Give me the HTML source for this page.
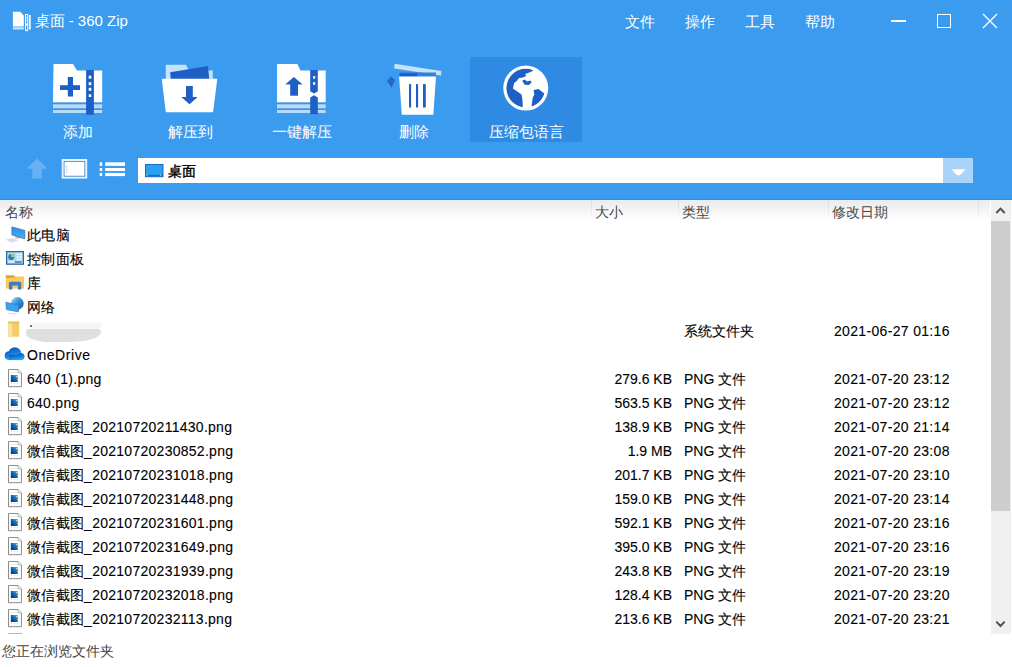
<!DOCTYPE html>
<html><head><meta charset="utf-8">
<style>
*{margin:0;padding:0;box-sizing:border-box}
html,body{width:1012px;height:667px;overflow:hidden;background:#fff;font-family:"Liberation Sans",sans-serif}
.abs{position:absolute}
#hdr{position:absolute;left:0;top:0;width:1012px;height:199px;border-bottom:0;background:#3a9bef}
.title{position:absolute;left:34.5px;top:12px;color:#fff;font-size:15px;line-height:18px;white-space:nowrap}
.menu{position:absolute;top:13px;color:#fff;font-size:15px;line-height:18px;white-space:nowrap}
.tb{position:absolute;top:57px;width:112px;height:85px}
.tb.sel{background:#2e8ae2;border-radius:2px}
.tbl{position:absolute;left:0;width:112px;top:66px;text-align:center;color:#fff;font-size:15px;line-height:18px;white-space:nowrap}
.tb svg{position:absolute}
#addr{position:absolute;left:138px;top:158px;width:835px;height:25px;background:#fff}
#dd{position:absolute;left:943px;top:158px;width:30px;height:25px;background:#a9d3f8}
#colhdr{position:absolute;left:0;top:199px;width:990px;height:24px;background:linear-gradient(#3a8ad8 0,#3a8ad8 1px,#e2f1fd 1px,#e2f1fd 2px,#ebebeb 2px,#fff 21px)}
.ch{position:absolute;top:4.7px;font-size:14px;line-height:16px;color:#474747;white-space:nowrap}
.sep{position:absolute;top:1px;width:1px;height:20px;background:linear-gradient(#dcdcdc,rgba(235,235,235,0))}
.row{position:absolute;left:0;width:990px;height:24px;font-size:14px;color:#000;-webkit-text-stroke:0.1px #000;white-space:nowrap}
.row span{position:absolute;top:3px;line-height:18px}
.nm{left:27px;letter-spacing:0.27px}
.sz{right:calc(990px - 672px)}
.tp{left:684px}
.dt{left:834px;letter-spacing:0.33px}
#sb{position:absolute;left:991px;top:200px;width:19.5px;height:434px;background:#f0f0f0}
#thumb{position:absolute;left:991px;top:221px;width:19px;height:290px;background:#cdcdcd}
#status{position:absolute;left:2px;top:642px;font-size:14px;line-height:18px;color:#444;white-space:nowrap}
</style></head><body>
<div id="hdr">
  <svg class="abs" style="left:12px;top:11px" width="20" height="21" viewBox="0 0 20 21">
<path d="M0.9 0.7H8.3L11.8 4.4V14.9H0.9Z" fill="#fff"/>
<rect x="0.9" y="15.5" width="10.9" height="1.1" fill="#fff"/>
<rect x="0.9" y="17.3" width="10.9" height="1.1" fill="#fff"/>
<rect x="13.5" y="3.5" width="2.3" height="15.8" fill="none" stroke="#fff" stroke-width="1"/>
<g fill="#fff"><rect x="14.2" y="6.5" width="1" height="1"/><rect x="14.2" y="9" width="1" height="1"/><rect x="13.5" y="12.5" width="2.3" height="2"/><rect x="14" y="19.3" width="1.6" height="0.9"/></g>
<rect x="17.1" y="4" width="1.6" height="14.6" fill="#fff"/>
</svg>
  <div class="title">桌面 - 360 Zip</div>
  <div class="menu" style="left:625px">文件</div>
  <div class="menu" style="left:685px">操作</div>
  <div class="menu" style="left:745px">工具</div>
  <div class="menu" style="left:805px">帮助</div>
  <div class="abs" style="left:891px;top:19.7px;width:14.5px;height:2.5px;background:#fff"></div>
  <div class="abs" style="left:936.5px;top:14px;width:14.5px;height:13.5px;border:1.4px solid #fff"></div>
  <svg class="abs" style="left:982px;top:13px" width="16" height="16" viewBox="0 0 16 16"><path d="M1 1L15 15M15 1L1 15" stroke="#fff" stroke-width="1.4"/></svg>

  <svg class="abs" style="left:53px;top:64px" width="50" height="51" viewBox="0 0 50 51">
<path d="M0.5 0H20L24 6.5H49.2V38.6H0Z" fill="#fff"/>
<rect x="0" y="38.6" width="49.2" height="10.4" fill="#4a8fd8"/><rect x="0" y="40.3" width="49.2" height="4" fill="#b6dbfb"/>
<rect x="0" y="46" width="49.2" height="3" fill="#b6dbfb"/>
<rect x="33.1" y="6" width="7.8" height="44.8" fill="#1d5fc4"/>
<g fill="#fff"><rect x="35.7" y="11.7" width="2.6" height="3"/><rect x="35.7" y="18.2" width="2.6" height="3"/><rect x="35.7" y="23.8" width="2.6" height="3"/><rect x="35.7" y="30.3" width="2.6" height="2.7"/></g>
<rect x="7" y="21.2" width="20" height="4.8" fill="#1d5fc4"/>
<rect x="14.8" y="13" width="5.2" height="19.5" fill="#1d5fc4"/>
</svg>
<div class="tb" style="left:22px"><div class="tbl">添加</div></div>
  <svg class="abs" style="left:158px;top:60px" width="64" height="58" viewBox="0 0 64 58">
<path d="M7.8 4.8H28L31 10.4H54.8V30H7.8Z" fill="#c5e1fb"/>
<path d="M12.2 12.2L50 6.1L51.5 22H13Z" fill="#1d5fc4"/>
<path d="M4.5 18.7H58.6Q59.3 18.7 59.2 19.5L55.2 51.4Q55.1 52.2 54.3 52.2H8.6Q7.8 52.2 7.7 51.4L3.8 19.5Q3.7 18.7 4.5 18.7Z" fill="#fff"/>
<rect x="28" y="26" width="6.8" height="11.4" fill="#1d5fc4"/>
<path d="M23.3 37H39.6L31.5 44.3Z" fill="#1d5fc4"/>
</svg>
<div class="tb" style="left:134px"><div class="tbl">解压到</div></div>
  <svg class="abs" style="left:270px;top:60px" width="64" height="58" viewBox="0 0 64 58">
<path d="M7 3.9H27.4L30.4 10.4H55.7V42.6H7Z" fill="#fff"/>
<rect x="7" y="42.6" width="48.7" height="10.4" fill="#4a8fd8"/><rect x="7" y="44.3" width="48.7" height="4" fill="#b6dbfb"/>
<rect x="7" y="50" width="48.7" height="3" fill="#b6dbfb"/>
<path d="M40.2 10H47.8V31.3L44 33.5L40.2 31.3Z" fill="#1d5fc4"/>
<path d="M40.2 54.3H47.8V37.4L44 35.2L40.2 37.4Z" fill="#1d5fc4"/>
<g fill="#fff"><rect x="43" y="16.1" width="2.2" height="2.6"/><rect x="43" y="22.2" width="2.2" height="2.6"/></g>
<rect x="20.2" y="23.5" width="7.8" height="12.2" fill="#1d5fc4"/>
<path d="M15.2 24.6H32.6L23.9 17Z" fill="#1d5fc4"/>
</svg>
<div class="tb" style="left:246px"><div class="tbl">一键解压</div></div>
  <svg class="abs" style="left:382px;top:58px" width="64" height="60" viewBox="0 0 64 60">
<path d="M12.6 5.8L59.4 13L59 17.6L12.2 10.6Z" fill="#c5e2fb"/>
<path d="M17.5 14.4H54L54 18.5H17.3Z" fill="#3580d8"/><path d="M18 15.3H35L35 18.5H17.3Z" fill="#1d5fc4"/>
<path d="M17.1 18.5H54L51.3 56.7H19.8Z" fill="#fff"/>
<g fill="#1d5fc4"><rect x="27" y="26.1" width="2.1" height="23.4"/><rect x="34" y="26.1" width="2.1" height="23.4"/><rect x="41" y="26.1" width="2.8" height="23.4"/></g>
<path d="M5 23L9 18.5L13 22L9.5 29.7Z" fill="#1d5fc4" opacity="0.85"/>
</svg>
<div class="tb" style="left:358px"><div class="tbl">删除</div></div>
  <div class="tb sel" style="left:470px"><div class="tbl">压缩包语言</div></div>
<svg class="abs" style="left:498px;top:62px" width="54" height="54" viewBox="0 0 54 54">
<circle cx="27.75" cy="26.1" r="22.5" fill="#fff"/>
<clipPath id="gc"><circle cx="27.75" cy="26.1" r="19.3"/></clipPath>
<g clip-path="url(#gc)" fill="#1d5fc4">
<path d="M34.8 0L34.8 8.9L30 10.9L27.1 12.1L28.3 13.8L25.1 15.4L21 16L19 18.8L16.2 21.1L15.4 24.3L15 26.7L18.6 29.1L23.5 32.4L24.3 36.4L25.1 48.6L0 48.6L0 0Z"/>
<path d="M24.2 18.8L26.7 17.4L29.1 19.4L32.4 18.6L33.6 20.6L30.8 23.1L26.7 22.7Z"/>
<path d="M35.6 27.9L40.5 27.1L45.3 30.8L48.6 32.4L48.6 48.6L33.2 48.6L34 40.5L34.8 35.6L36.4 32.4Z"/>
</g>
</svg>

  <svg class="abs" style="left:22px;top:152px" width="110" height="38" viewBox="0 0 110 38">
<path d="M4.3 16.8L15.2 6.5L25.5 16.8H20.1V26.6H10.3V16.8Z" fill="#66b1f2"/>
<rect x="39.7" y="7" width="25.5" height="19.6" fill="#e3f5ff"/>
<rect x="41.7" y="9" width="21.5" height="15.6" fill="#3a7fc8"/>
<rect x="42.5" y="9.8" width="19.9" height="14" fill="#fff"/>
<g fill="#777"><rect x="44.3" y="14.2" width="0.9" height="0.9"/><rect x="44.3" y="16.9" width="0.9" height="0.9"/><rect x="44.3" y="19.6" width="0.9" height="0.9"/></g>
<g fill="#fff"><rect x="77.7" y="10.3" width="2.5" height="3.6"/><rect x="77.7" y="16" width="2.5" height="3"/><rect x="77.7" y="20.9" width="2.5" height="3.2"/>
<rect x="83.2" y="10.3" width="19.8" height="3.6"/><rect x="83.2" y="16" width="19.8" height="3"/><rect x="83.2" y="20.9" width="19.8" height="3.2"/></g>
</svg>
<div id="addr"><svg class="abs" style="left:6.5px;top:6px" width="19" height="14" viewBox="0 0 19 14"><rect x="0.5" y="0.5" width="17.5" height="12.2" fill="#29a0f0" stroke="#1b6cbf" stroke-width="1"/><rect x="1" y="10.8" width="16.5" height="1.5" fill="#1b6cbf"/><g fill="#fff"><rect x="1.5" y="10.5" width="1" height="1"/><rect x="15" y="10.5" width="1" height="1"/></g></svg><div class="abs" style="left:30px;top:4px;font-size:14px;line-height:18px;color:#000;-webkit-text-stroke:0.4px #000">桌面</div></div>
  <div id="dd"><svg class="abs" style="left:8px;top:11px" width="15" height="8" viewBox="0 0 15 8"><path d="M0.5 0.3H14.5L9 6.2H6Z" fill="#fff"/></svg></div>
</div>

<div id="colhdr">
  <div class="ch" style="left:5px">名称</div>
  <div class="sep" style="left:591px"></div>
  <div class="ch" style="left:595px">大小</div>
  <div class="sep" style="left:678px"></div>
  <div class="ch" style="left:682px">类型</div>
  <div class="sep" style="left:828px"></div>
  <div class="ch" style="left:832px">修改日期</div>
  <div class="sep" style="left:978px"></div>
</div>

<div id="rows">
<div class="row" style="top:223px"><svg class="abs" style="left:0px;top:0px" width="28" height="24" viewBox="0 0 28 24">
<path d="M5.5 16.5L12.5 15.3L18.5 17.3L11 19.7Z" fill="#d9dcea"/>
<path d="M15.3 13.6H19.9V15.5H15.3Z" fill="#c9a38f" opacity="0.8"/>
<defs><linearGradient id="mg" x1="0" y1="0" x2="0" y2="1"><stop offset="0" stop-color="#2f8fe0"/><stop offset="1" stop-color="#45b0f5"/></linearGradient></defs>
<path d="M11.9 3.9L24.8 7.4V15.8L11.9 11.9Z" fill="url(#mg)" stroke="#2a6aa8" stroke-width="0.7"/>
</svg><span class="nm">此电脑</span></div>
<div class="row" style="top:247px"><svg class="abs" style="left:6px;top:4px" width="18" height="14" viewBox="0 0 18 14">
<rect x="0.6" y="0.6" width="16.8" height="12.6" fill="#a9d8f7" stroke="#2d6495" stroke-width="1.2"/>
<path d="M5.2 3A3 3 0 1 0 8.2 6H5.2Z" fill="#2f78b8"/><path d="M5.8 2.4V5.4H8.8A3 3 0 0 0 5.8 2.4Z" fill="#9cc94a"/>
<g fill="#fff"><rect x="10.6" y="2.6" width="2" height="1.6"/><rect x="13.4" y="2.6" width="2" height="1.6"/><rect x="10.6" y="5.2" width="2" height="1.6"/><rect x="13.4" y="5.2" width="2" height="1.6"/><rect x="10.6" y="7.8" width="2" height="1.6"/><rect x="13.4" y="7.8" width="2" height="1.6"/></g>
<rect x="2.2" y="10.4" width="6" height="1.2" fill="#eef6fb"/><rect x="9" y="10.4" width="6.5" height="1.2" fill="#2d6495"/>
</svg><span class="nm">控制面板</span></div>
<div class="row" style="top:271px"><svg class="abs" style="left:5px;top:3px" width="20" height="18" viewBox="0 0 20 18">
<path d="M0.8 1.4H9.4L10.5 2.5H19V14.5H0.8Z" fill="#f9c95e"/>
<rect x="0.8" y="1.4" width="8.6" height="2.4" fill="#e3a226"/>
<path d="M3.9 9.2Q3.9 7.7 5.4 7.7H14.8Q16.3 7.7 16.3 9.2V15.6H12.9V11.4H7.3V15.6H3.9Z" fill="#3c7fbf"/>
</svg><span class="nm">库</span></div>
<div class="row" style="top:295px"><svg class="abs" style="left:0px;top:0px" width="28" height="24" viewBox="0 0 28 24">
<defs><linearGradient id="ng" x1="0" y1="0" x2="1" y2="1"><stop offset="0" stop-color="#a6e2f0"/><stop offset="0.45" stop-color="#3b8fd8"/><stop offset="1" stop-color="#1d5f8f"/></linearGradient></defs>
<circle cx="17.4" cy="8.4" r="6.3" fill="url(#ng)"/>
<path d="M5.9 7.2L18.8 10.3L18.4 16.9L6.3 14.6Z" fill="#3aa2ee" stroke="#2a74b8" stroke-width="0.6"/>
<path d="M8.2 18.1L16 18.8L16 19.5L8.2 18.8Z" fill="#c5cbd8"/>
</svg><span class="nm">网络</span></div>
<div class="row" style="top:319px"><svg class="abs" style="left:0px;top:0px" width="24" height="24" viewBox="0 0 24 24">
<rect x="8" y="2.7" width="11.2" height="15" fill="#f3cd66"/>
<rect x="8" y="2.7" width="4.2" height="15" fill="#f7e1a0"/>
<rect x="8" y="2.7" width="11.2" height="1.6" fill="#e9bb50"/>
</svg><span class="tp">系统文件夹</span><span class="dt">2021-06-27 01:16</span></div>
<div class="row" style="top:343px"><svg class="abs" style="left:0px;top:0px" width="28" height="24" viewBox="0 0 28 24">
<defs><linearGradient id="og" x1="0" y1="0" x2="0.3" y2="1"><stop offset="0" stop-color="#0a55b0"/><stop offset="0.5" stop-color="#1479d6"/><stop offset="1" stop-color="#22a2f2"/></linearGradient></defs>
<g fill="url(#og)"><circle cx="9" cy="12.7" r="4.4"/><circle cx="14.8" cy="10.6" r="6.4"/><circle cx="20.9" cy="13.5" r="3.6"/><rect x="9" y="12" width="11.9" height="5.1"/></g>
</svg><span class="nm" style="letter-spacing:0.55px">OneDrive</span></div>
<div class="row" style="top:367px"><svg class="abs" style="left:8px;top:2px" width="14" height="19" viewBox="0 0 14 19">
<path d="M0.5 0.5H10L13.4 3.9V17.7H0.5Z" fill="#fff" stroke="#8a8a8a" stroke-width="1"/>
<path d="M10 0.5V3.9H13.4" fill="#eee" stroke="#aaa" stroke-width="0.8"/>
<defs><linearGradient id="pg" x1="1" y1="0" x2="0" y2="1"><stop offset="0" stop-color="#4ab8f4"/><stop offset="0.5" stop-color="#1468b0"/><stop offset="1" stop-color="#052a5e"/></linearGradient></defs>
<rect x="2.8" y="6" width="7" height="7" fill="url(#pg)"/>
<rect x="8" y="7" width="1" height="1" fill="#cde"/>
<g fill="#cfe6f8"><rect x="2.5" y="14.5" width="8" height="0.6"/><rect x="2.5" y="3" width="6" height="0.6"/></g>
</svg><span class="nm">640 (1).png</span><span class="sz">279.6 KB</span><span class="tp">PNG 文件</span><span class="dt">2021-07-20 23:12</span></div>
<div class="row" style="top:391px"><svg class="abs" style="left:8px;top:2px" width="14" height="19" viewBox="0 0 14 19">
<path d="M0.5 0.5H10L13.4 3.9V17.7H0.5Z" fill="#fff" stroke="#8a8a8a" stroke-width="1"/>
<path d="M10 0.5V3.9H13.4" fill="#eee" stroke="#aaa" stroke-width="0.8"/>
<defs><linearGradient id="pg" x1="1" y1="0" x2="0" y2="1"><stop offset="0" stop-color="#4ab8f4"/><stop offset="0.5" stop-color="#1468b0"/><stop offset="1" stop-color="#052a5e"/></linearGradient></defs>
<rect x="2.8" y="6" width="7" height="7" fill="url(#pg)"/>
<rect x="8" y="7" width="1" height="1" fill="#cde"/>
<g fill="#cfe6f8"><rect x="2.5" y="14.5" width="8" height="0.6"/><rect x="2.5" y="3" width="6" height="0.6"/></g>
</svg><span class="nm">640.png</span><span class="sz">563.5 KB</span><span class="tp">PNG 文件</span><span class="dt">2021-07-20 23:12</span></div>
<div class="row" style="top:415px"><svg class="abs" style="left:8px;top:2px" width="14" height="19" viewBox="0 0 14 19">
<path d="M0.5 0.5H10L13.4 3.9V17.7H0.5Z" fill="#fff" stroke="#8a8a8a" stroke-width="1"/>
<path d="M10 0.5V3.9H13.4" fill="#eee" stroke="#aaa" stroke-width="0.8"/>
<defs><linearGradient id="pg" x1="1" y1="0" x2="0" y2="1"><stop offset="0" stop-color="#4ab8f4"/><stop offset="0.5" stop-color="#1468b0"/><stop offset="1" stop-color="#052a5e"/></linearGradient></defs>
<rect x="2.8" y="6" width="7" height="7" fill="url(#pg)"/>
<rect x="8" y="7" width="1" height="1" fill="#cde"/>
<g fill="#cfe6f8"><rect x="2.5" y="14.5" width="8" height="0.6"/><rect x="2.5" y="3" width="6" height="0.6"/></g>
</svg><span class="nm">微信截图_20210720211430.png</span><span class="sz">138.9 KB</span><span class="tp">PNG 文件</span><span class="dt">2021-07-20 21:14</span></div>
<div class="row" style="top:439px"><svg class="abs" style="left:8px;top:2px" width="14" height="19" viewBox="0 0 14 19">
<path d="M0.5 0.5H10L13.4 3.9V17.7H0.5Z" fill="#fff" stroke="#8a8a8a" stroke-width="1"/>
<path d="M10 0.5V3.9H13.4" fill="#eee" stroke="#aaa" stroke-width="0.8"/>
<defs><linearGradient id="pg" x1="1" y1="0" x2="0" y2="1"><stop offset="0" stop-color="#4ab8f4"/><stop offset="0.5" stop-color="#1468b0"/><stop offset="1" stop-color="#052a5e"/></linearGradient></defs>
<rect x="2.8" y="6" width="7" height="7" fill="url(#pg)"/>
<rect x="8" y="7" width="1" height="1" fill="#cde"/>
<g fill="#cfe6f8"><rect x="2.5" y="14.5" width="8" height="0.6"/><rect x="2.5" y="3" width="6" height="0.6"/></g>
</svg><span class="nm">微信截图_20210720230852.png</span><span class="sz">1.9 MB</span><span class="tp">PNG 文件</span><span class="dt">2021-07-20 23:08</span></div>
<div class="row" style="top:463px"><svg class="abs" style="left:8px;top:2px" width="14" height="19" viewBox="0 0 14 19">
<path d="M0.5 0.5H10L13.4 3.9V17.7H0.5Z" fill="#fff" stroke="#8a8a8a" stroke-width="1"/>
<path d="M10 0.5V3.9H13.4" fill="#eee" stroke="#aaa" stroke-width="0.8"/>
<defs><linearGradient id="pg" x1="1" y1="0" x2="0" y2="1"><stop offset="0" stop-color="#4ab8f4"/><stop offset="0.5" stop-color="#1468b0"/><stop offset="1" stop-color="#052a5e"/></linearGradient></defs>
<rect x="2.8" y="6" width="7" height="7" fill="url(#pg)"/>
<rect x="8" y="7" width="1" height="1" fill="#cde"/>
<g fill="#cfe6f8"><rect x="2.5" y="14.5" width="8" height="0.6"/><rect x="2.5" y="3" width="6" height="0.6"/></g>
</svg><span class="nm">微信截图_20210720231018.png</span><span class="sz">201.7 KB</span><span class="tp">PNG 文件</span><span class="dt">2021-07-20 23:10</span></div>
<div class="row" style="top:487px"><svg class="abs" style="left:8px;top:2px" width="14" height="19" viewBox="0 0 14 19">
<path d="M0.5 0.5H10L13.4 3.9V17.7H0.5Z" fill="#fff" stroke="#8a8a8a" stroke-width="1"/>
<path d="M10 0.5V3.9H13.4" fill="#eee" stroke="#aaa" stroke-width="0.8"/>
<defs><linearGradient id="pg" x1="1" y1="0" x2="0" y2="1"><stop offset="0" stop-color="#4ab8f4"/><stop offset="0.5" stop-color="#1468b0"/><stop offset="1" stop-color="#052a5e"/></linearGradient></defs>
<rect x="2.8" y="6" width="7" height="7" fill="url(#pg)"/>
<rect x="8" y="7" width="1" height="1" fill="#cde"/>
<g fill="#cfe6f8"><rect x="2.5" y="14.5" width="8" height="0.6"/><rect x="2.5" y="3" width="6" height="0.6"/></g>
</svg><span class="nm">微信截图_20210720231448.png</span><span class="sz">159.0 KB</span><span class="tp">PNG 文件</span><span class="dt">2021-07-20 23:14</span></div>
<div class="row" style="top:511px"><svg class="abs" style="left:8px;top:2px" width="14" height="19" viewBox="0 0 14 19">
<path d="M0.5 0.5H10L13.4 3.9V17.7H0.5Z" fill="#fff" stroke="#8a8a8a" stroke-width="1"/>
<path d="M10 0.5V3.9H13.4" fill="#eee" stroke="#aaa" stroke-width="0.8"/>
<defs><linearGradient id="pg" x1="1" y1="0" x2="0" y2="1"><stop offset="0" stop-color="#4ab8f4"/><stop offset="0.5" stop-color="#1468b0"/><stop offset="1" stop-color="#052a5e"/></linearGradient></defs>
<rect x="2.8" y="6" width="7" height="7" fill="url(#pg)"/>
<rect x="8" y="7" width="1" height="1" fill="#cde"/>
<g fill="#cfe6f8"><rect x="2.5" y="14.5" width="8" height="0.6"/><rect x="2.5" y="3" width="6" height="0.6"/></g>
</svg><span class="nm">微信截图_20210720231601.png</span><span class="sz">592.1 KB</span><span class="tp">PNG 文件</span><span class="dt">2021-07-20 23:16</span></div>
<div class="row" style="top:535px"><svg class="abs" style="left:8px;top:2px" width="14" height="19" viewBox="0 0 14 19">
<path d="M0.5 0.5H10L13.4 3.9V17.7H0.5Z" fill="#fff" stroke="#8a8a8a" stroke-width="1"/>
<path d="M10 0.5V3.9H13.4" fill="#eee" stroke="#aaa" stroke-width="0.8"/>
<defs><linearGradient id="pg" x1="1" y1="0" x2="0" y2="1"><stop offset="0" stop-color="#4ab8f4"/><stop offset="0.5" stop-color="#1468b0"/><stop offset="1" stop-color="#052a5e"/></linearGradient></defs>
<rect x="2.8" y="6" width="7" height="7" fill="url(#pg)"/>
<rect x="8" y="7" width="1" height="1" fill="#cde"/>
<g fill="#cfe6f8"><rect x="2.5" y="14.5" width="8" height="0.6"/><rect x="2.5" y="3" width="6" height="0.6"/></g>
</svg><span class="nm">微信截图_20210720231649.png</span><span class="sz">395.0 KB</span><span class="tp">PNG 文件</span><span class="dt">2021-07-20 23:16</span></div>
<div class="row" style="top:559px"><svg class="abs" style="left:8px;top:2px" width="14" height="19" viewBox="0 0 14 19">
<path d="M0.5 0.5H10L13.4 3.9V17.7H0.5Z" fill="#fff" stroke="#8a8a8a" stroke-width="1"/>
<path d="M10 0.5V3.9H13.4" fill="#eee" stroke="#aaa" stroke-width="0.8"/>
<defs><linearGradient id="pg" x1="1" y1="0" x2="0" y2="1"><stop offset="0" stop-color="#4ab8f4"/><stop offset="0.5" stop-color="#1468b0"/><stop offset="1" stop-color="#052a5e"/></linearGradient></defs>
<rect x="2.8" y="6" width="7" height="7" fill="url(#pg)"/>
<rect x="8" y="7" width="1" height="1" fill="#cde"/>
<g fill="#cfe6f8"><rect x="2.5" y="14.5" width="8" height="0.6"/><rect x="2.5" y="3" width="6" height="0.6"/></g>
</svg><span class="nm">微信截图_20210720231939.png</span><span class="sz">243.8 KB</span><span class="tp">PNG 文件</span><span class="dt">2021-07-20 23:19</span></div>
<div class="row" style="top:583px"><svg class="abs" style="left:8px;top:2px" width="14" height="19" viewBox="0 0 14 19">
<path d="M0.5 0.5H10L13.4 3.9V17.7H0.5Z" fill="#fff" stroke="#8a8a8a" stroke-width="1"/>
<path d="M10 0.5V3.9H13.4" fill="#eee" stroke="#aaa" stroke-width="0.8"/>
<defs><linearGradient id="pg" x1="1" y1="0" x2="0" y2="1"><stop offset="0" stop-color="#4ab8f4"/><stop offset="0.5" stop-color="#1468b0"/><stop offset="1" stop-color="#052a5e"/></linearGradient></defs>
<rect x="2.8" y="6" width="7" height="7" fill="url(#pg)"/>
<rect x="8" y="7" width="1" height="1" fill="#cde"/>
<g fill="#cfe6f8"><rect x="2.5" y="14.5" width="8" height="0.6"/><rect x="2.5" y="3" width="6" height="0.6"/></g>
</svg><span class="nm">微信截图_20210720232018.png</span><span class="sz">128.4 KB</span><span class="tp">PNG 文件</span><span class="dt">2021-07-20 23:20</span></div>
<div class="row" style="top:607px"><svg class="abs" style="left:8px;top:2px" width="14" height="19" viewBox="0 0 14 19">
<path d="M0.5 0.5H10L13.4 3.9V17.7H0.5Z" fill="#fff" stroke="#8a8a8a" stroke-width="1"/>
<path d="M10 0.5V3.9H13.4" fill="#eee" stroke="#aaa" stroke-width="0.8"/>
<defs><linearGradient id="pg" x1="1" y1="0" x2="0" y2="1"><stop offset="0" stop-color="#4ab8f4"/><stop offset="0.5" stop-color="#1468b0"/><stop offset="1" stop-color="#052a5e"/></linearGradient></defs>
<rect x="2.8" y="6" width="7" height="7" fill="url(#pg)"/>
<rect x="8" y="7" width="1" height="1" fill="#cde"/>
<g fill="#cfe6f8"><rect x="2.5" y="14.5" width="8" height="0.6"/><rect x="2.5" y="3" width="6" height="0.6"/></g>
</svg><span class="nm">微信截图_20210720232113.png</span><span class="sz">213.6 KB</span><span class="tp">PNG 文件</span><span class="dt">2021-07-20 23:21</span></div>
</div>

<div class="abs" style="left:31.5px;top:322.7px;width:69.5px;height:6px;background:#f4f4f4;filter:blur(0.8px)"></div>
<div class="abs" style="left:26px;top:328.5px;width:75px;height:13.3px;background:#dfdfdf;border-radius:2px 4px 40px 30px/2px 4px 12px 10px;filter:blur(0.7px)"></div>
<div class="abs" style="left:30px;top:324.5px;width:2px;height:2px;background:#444;border-radius:1px"></div>
<div class="abs" style="left:0;top:199px;width:1012px;height:1px;background:#3a8ad8"></div>
<div id="sb"></div>
<div id="thumb"></div>
<svg class="abs" style="left:991px;top:203px" width="19" height="20" viewBox="0 0 19 20"><path d="M5.3 10L9.5 5.6L13.7 10" fill="none" stroke="#505050" stroke-width="2"/></svg>
<svg class="abs" style="left:991px;top:613px" width="19" height="20" viewBox="0 0 19 20"><path d="M5.3 8.6L9.5 13L13.7 8.6" fill="none" stroke="#505050" stroke-width="2"/></svg>
<div class="abs" style="left:8px;top:633px;width:14px;height:1px;background:#b8b8b8"></div>
<div id="status">您正在浏览文件夹</div>
</body></html>
